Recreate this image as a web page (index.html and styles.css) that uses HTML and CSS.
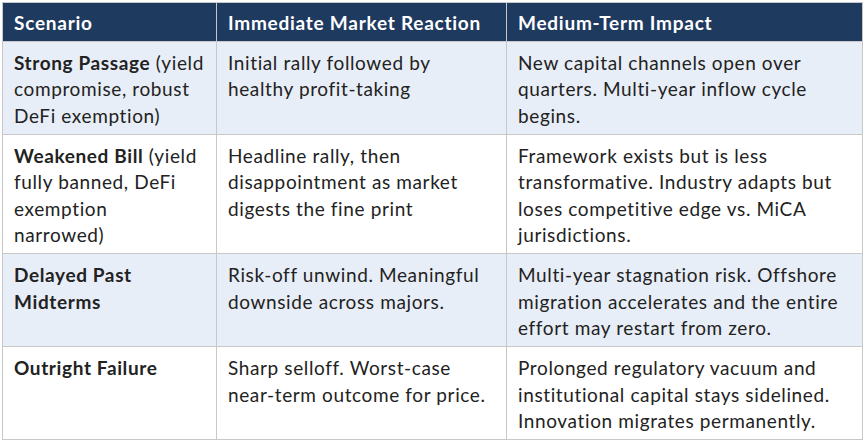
FILE: index.html
```html
<!DOCTYPE html>
<html>
<head>
<meta charset="utf-8">
<link rel="stylesheet" href="styles.css">
</head>
<body>
<table class="scenarios">
  <colgroup>
    <col class="c1">
    <col class="c2">
    <col class="c3">
  </colgroup>
  <thead>
    <tr>
      <th>Scenario</th>
      <th>Immediate Market Reaction</th>
      <th>Medium-Term Impact</th>
    </tr>
  </thead>
  <tbody>
    <tr class="shaded">
      <td><strong>Strong Passage</strong> (yield compromise, robust DeFi exemption)</td>
      <td>Initial rally followed by healthy profit-taking</td>
      <td>New capital channels open over quarters. Multi-year inflow cycle begins.</td>
    </tr>
    <tr>
      <td><strong>Weakened Bill</strong> (yield fully banned, DeFi exemption<br>narrowed)</td>
      <td>Headline rally, then disappointment as market digests the fine print</td>
      <td>Framework exists but is less transformative. Industry adapts but loses competitive edge vs. MiCA jurisdictions.</td>
    </tr>
    <tr class="shaded">
      <td><strong>Delayed Past Midterms</strong></td>
      <td>Risk-off unwind. Meaningful downside across majors.</td>
      <td>Multi-year stagnation risk. Offshore migration accelerates and the entire effort may restart from zero.</td>
    </tr>
    <tr>
      <td><strong>Outright Failure</strong></td>
      <td>Sharp selloff. Worst-case near-term outcome for price.</td>
      <td>Prolonged regulatory vacuum and institutional capital stays sidelined. Innovation migrates permanently.</td>
    </tr>
  </tbody>
</table>
</body>
</html>
```
FILE: styles.css
```css
html, body {
  margin: 0;
  padding: 0;
  background: #ffffff;
}
body {
  padding: 2px 0 0 2px;
  font-family: Lato, "Liberation Sans", sans-serif;
}
.scenarios {
  border-collapse: collapse;
  width: 860px;
  table-layout: fixed;
  font-size: 19px;
  line-height: 26.5px;
  letter-spacing: 0.62px;
  color: #222222;
  border: 1px solid #c8c8c8;
}
.c1 { width: 214px; }
.c2 { width: 290px; }
.c3 { width: 356px; }
.scenarios th,
.scenarios td {
  border: 1px solid #c8c8c8;
  padding: 8px 11px 4.5px 11px;
  text-align: left;
  vertical-align: top;
}
.scenarios th {
  background: #1f3a5f;
  color: #ffffff;
  font-weight: 700;
  letter-spacing: 0.75px;
  padding-top: 7px;
  padding-bottom: 4px;
}
.scenarios strong {
  font-weight: 700;
}
.shaded td {
  background: #e8eef7;
}
```
